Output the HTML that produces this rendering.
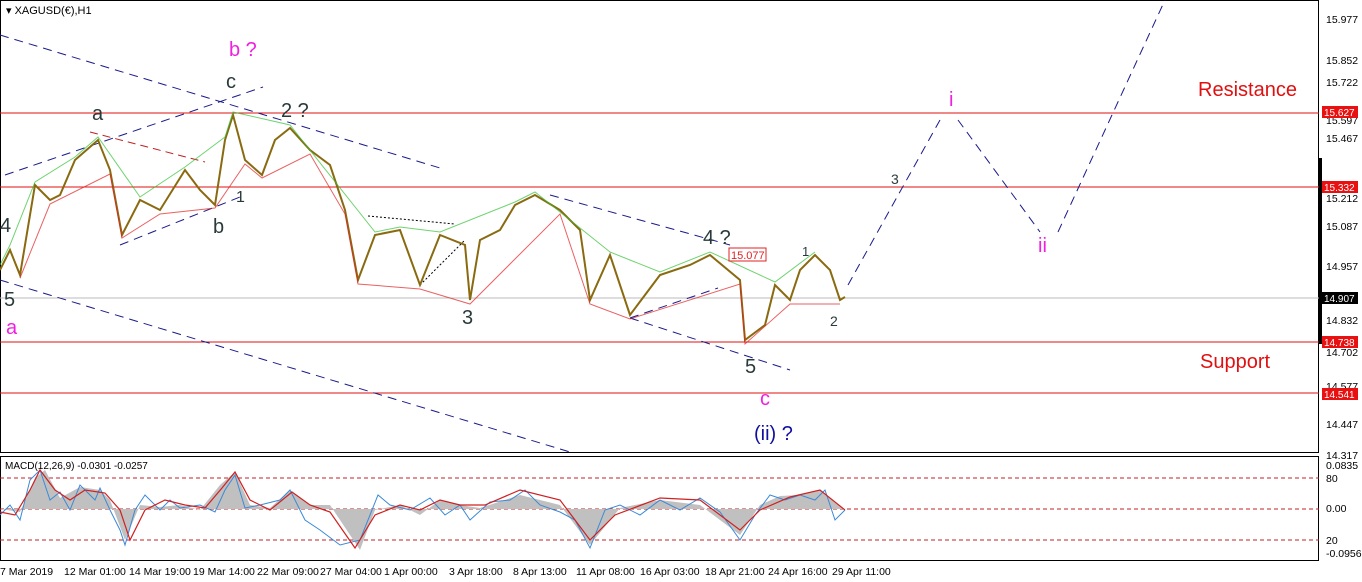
<!DOCTYPE html><html><head><meta charset="utf-8"><style>
body{margin:0;width:1362px;height:582px;background:#fff;overflow:hidden;font-family:"Liberation Sans",sans-serif}
svg{position:absolute;left:0;top:0}
</style></head><body>
<svg width="1362" height="582" xmlns="http://www.w3.org/2000/svg" font-family="Liberation Sans, DejaVu Sans, sans-serif">
<rect x="0.5" y="0.5" width="1318" height="452" fill="#fff" stroke="#000"/>
<rect x="0.5" y="456.5" width="1318" height="104" fill="#fff" stroke="#000"/>
<text x="6" y="14" font-size="11" fill="#000">▾ XAGUSD(€),H1</text>
<g stroke="#e01010" stroke-width="1">
<line x1="0" y1="113" x2="1319" y2="113"/><line x1="0" y1="187" x2="1319" y2="187"/>
<line x1="0" y1="342" x2="1319" y2="342"/><line x1="0" y1="393" x2="1319" y2="393"/></g>
<line x1="0" y1="298" x2="1319" y2="298" stroke="#bbb"/>
<g stroke="#1a1a8a" stroke-dasharray="9,6" fill="none" stroke-width="1">
<line x1="0" y1="35" x2="440" y2="168"/><line x1="0" y1="280" x2="570" y2="452"/>
<line x1="5" y1="175" x2="263" y2="87"/><line x1="120" y1="245" x2="245" y2="195"/>
<line x1="550" y1="195" x2="730" y2="245"/><line x1="630" y1="318" x2="790" y2="370"/>
<line x1="630" y1="318" x2="718" y2="288"/>
<polyline points="848,285 940,120"/><polyline points="958,120 1040,232"/><polyline points="1058,232 1165,0"/>
</g>
<line x1="90" y1="132" x2="205" y2="162" stroke="#c02020" stroke-dasharray="8,5"/>
<line x1="368" y1="216" x2="455" y2="224" stroke="#000" stroke-dasharray="2,2"/>
<line x1="420" y1="285" x2="465" y2="240" stroke="#000" stroke-dasharray="2,2"/>
<polyline fill="none" stroke="#8a6a10" stroke-width="2" points="0,270 10,250 20,275 35,185 50,200 60,195 75,160 98,140 110,170 122,235 140,200 160,210 185,170 200,190 215,205 225,140 233,115 245,160 262,175 275,140 290,128 310,150 330,165 345,210 358,280 375,235 400,230 420,285 440,235 465,245 470,300 480,240 500,230 515,205 535,195 560,210 580,230 590,300 610,255 630,315 660,275 690,265 710,255 740,280 745,340 765,325 775,285 790,300 800,270 815,255 830,270 840,300 845,297"/>
<polyline fill="none" stroke="#30c030" stroke-width="1" opacity=".7" points="0,265 10,245 35,182 75,157 98,137 140,197 185,167 225,137 233,112 290,125 375,232 400,227 440,232 515,202 535,192 610,252 660,272 710,252 775,282 815,252"/>
<polyline fill="none" stroke="#e02020" stroke-width="1" opacity=".7" points="20,278 50,204 110,174 122,238 160,214 215,208 245,164 262,178 310,154 345,214 358,284 420,289 470,304 560,214 590,304 630,319 740,284 745,344 790,304 840,304"/>
<g font-size="20" fill="#2a3a3a">
<text x="92" y="120">a</text><text x="226" y="88">c</text><text x="281" y="117">2 ?</text>
<text x="213" y="233">b</text><text x="236" y="202" font-size="16">1</text>
<text x="0" y="232">4</text><text x="4" y="306">5</text><text x="462" y="324">3</text>
<text x="703" y="244">4 ?</text><text x="745" y="373">5</text>
<text x="802" y="256" font-size="13">1</text><text x="830" y="326" font-size="14">2</text><text x="891" y="184" font-size="14">3</text></g>
<g fill="#f020e0" font-size="20"><text x="229" y="56">b ?</text><text x="6" y="334">a</text>
<text x="760" y="405">c</text><text x="949" y="106">i</text><text x="1038" y="252">ii</text></g>
<text x="754" y="440" font-size="20" fill="#1010a0">(ii) ?</text>
<rect x="729" y="248" width="37" height="13" fill="#fff" stroke="#e02020"/>
<text x="731" y="259" font-size="11" fill="#e02020">15.077</text>
<g fill="#e01010" font-size="20"><text x="1198" y="96">Resistance</text><text x="1200" y="368">Support</text></g>
<g font-size="10.5" fill="#000">
<text x="1326" y="23">15.977</text><text x="1326" y="64">15.852</text><text x="1326" y="86">15.722</text>
<text x="1326" y="124">15.597</text><text x="1326" y="142">15.467</text><text x="1326" y="202">15.212</text>
<text x="1326" y="230">15.087</text><text x="1326" y="270">14.957</text><text x="1326" y="324">14.832</text>
<text x="1326" y="356">14.702</text><text x="1326" y="390">14.577</text><text x="1326" y="428">14.447</text>
<text x="1326" y="459">14.317</text><text x="1326" y="469">0.0835</text><text x="1326" y="482">80</text>
<text x="1326" y="512">0.00</text><text x="1326" y="544">20</text><text x="1326" y="557">-0.0956</text></g>
<rect x="1319" y="158" width="3" height="186" fill="#000"/>
<g font-size="10" fill="#fff"><rect x="1322" y="106" width="36" height="12" fill="#e81010"/><text x="1324" y="116">15.627</text>
<rect x="1322" y="181" width="36" height="12" fill="#e81010"/><text x="1324" y="191">15.332</text>
<rect x="1322" y="292" width="36" height="12" fill="#000"/><text x="1324" y="302">14.907</text>
<rect x="1322" y="336" width="36" height="12" fill="#e81010"/><text x="1324" y="346">14.738</text>
<rect x="1322" y="388" width="36" height="12" fill="#e81010"/><text x="1324" y="398">14.541</text></g>
<g stroke="#c02020" stroke-dasharray="4,3"><line x1="0" y1="478" x2="1319" y2="478"/><line x1="0" y1="509" x2="1319" y2="509"/><line x1="0" y1="540" x2="1319" y2="540"/></g>
<text x="5" y="469" font-size="10" fill="#000">MACD(12,26,9) -0.0301 -0.0257</text>
<polygon fill="#c0c0c0" points="0,509 20,512 35,478 45,470 60,498 80,487 100,490 110,500 125,540 140,505 160,507 180,505 200,510 220,485 235,472 250,505 270,508 290,490 310,505 330,505 360,550 375,510 400,505 420,515 440,500 460,505 480,508 520,495 560,505 590,545 620,508 660,500 700,505 740,535 760,505 780,496 800,495 820,490 845,510 845,509 0,509"/>
<polyline fill="none" stroke="#3a8ad8" stroke-width="1" points="0,515 10,505 20,520 30,480 40,470 50,500 60,492 70,510 80,485 95,500 100,488 110,510 120,530 125,545 135,510 145,495 160,510 170,500 180,508 200,505 215,512 225,490 235,475 245,508 260,505 280,500 290,490 305,520 320,530 340,545 360,540 378,495 390,505 410,510 430,498 445,515 460,505 470,520 490,502 510,500 525,490 540,505 560,512 575,520 590,548 605,510 620,505 640,515 660,500 680,510 700,498 720,512 740,540 755,515 770,495 785,500 800,495 815,500 825,490 835,520 845,510"/>
<polyline fill="none" stroke="#d02020" stroke-width="1.2" points="0,512 15,515 30,490 40,470 55,490 70,500 85,490 105,493 120,510 130,540 145,510 165,500 185,505 205,508 222,488 235,472 250,500 270,510 292,492 310,505 330,512 355,548 375,515 400,505 420,510 440,500 460,505 485,505 520,490 560,500 590,540 615,515 660,498 700,500 740,530 760,510 790,497 820,490 845,510"/>
<g font-size="10.5" fill="#000">
<text x="0" y="575">7 Mar 2019</text><text x="64" y="575">12 Mar 01:00</text><text x="129" y="575">14 Mar 19:00</text>
<text x="193" y="575">19 Mar 14:00</text><text x="257" y="575">22 Mar 09:00</text><text x="320" y="575">27 Mar 04:00</text>
<text x="384" y="575">1 Apr 00:00</text><text x="449" y="575">3 Apr 18:00</text><text x="513" y="575">8 Apr 13:00</text>
<text x="576" y="575">11 Apr 08:00</text><text x="640" y="575">16 Apr 03:00</text><text x="705" y="575">18 Apr 21:00</text>
<text x="768" y="575">24 Apr 16:00</text><text x="832" y="575">29 Apr 11:00</text></g>
</svg></body></html>
